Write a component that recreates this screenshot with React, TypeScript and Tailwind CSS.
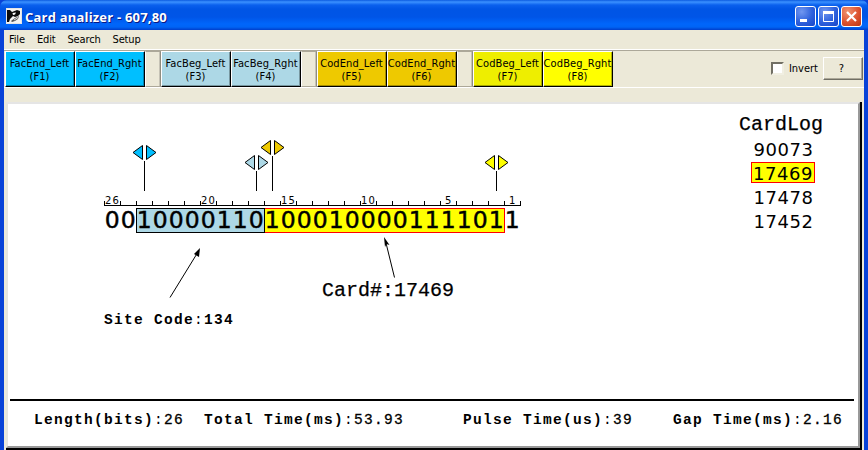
import React from 'react';

const UI = "font-['DejaVu_Sans_Condensed','DejaVu_Sans',sans-serif]";

type Tool = { label: string; fkey: string; color: string };

const groups: Tool[][] = [
  [
    { label: 'FacEnd_Left', fkey: '(F1)', color: 'bg-[#00bfff]' },
    { label: 'FacEnd_Rght', fkey: '(F2)', color: 'bg-[#00bfff]' },
  ],
  [
    { label: 'FacBeg_Left', fkey: '(F3)', color: 'bg-[#add8e6]' },
    { label: 'FacBeg_Rght', fkey: '(F4)', color: 'bg-[#add8e6]' },
  ],
  [
    { label: 'CodEnd_Left', fkey: '(F5)', color: 'bg-[#eec900]' },
    { label: 'CodEnd_Rght', fkey: '(F6)', color: 'bg-[#eec900]' },
  ],
  [
    { label: 'CodBeg_Left', fkey: '(F7)', color: 'bg-[#eeee00]' },
    { label: 'CodBeg_Rght', fkey: '(F8)', color: 'bg-[#ffff00]' },
  ],
];

function ToolButton({ label, fkey, color }: Tool) {
  return (
    <button
      className={`flex h-9 w-[70px] flex-col items-center justify-center border border-t-white border-l-white border-r-black border-b-black pt-px text-[11px] leading-[13px] whitespace-nowrap shadow-[inset_-1px_-1px_0_rgba(0,0,0,0.3)] ${color}`}
    >
      <span className="-ml-px tracking-[0.1px]">{label}</span>
      <span className="-ml-px tracking-[0.1px]">{fkey}</span>
    </button>
  );
}

function Spacer() {
  return <div className="h-9 w-4 border border-t-[#aca899] border-l-white border-r-[#8f8c80] border-b-[#aca899] shadow-[inset_-1px_0_0_#c5c2b5]" />;
}

function AppIcon() {
  return (
    <svg width="16" height="16" viewBox="0 0 16 16">
      <rect width="16" height="16" fill="#f4f4f4" />
      <path d="M1 2H4L6 4L11 2L14 3L14 6L12 8L9 9L7 8L4 11L3 14H1Z" fill="#0b0b0b" />
      <path d="M6.5 5L10 4.5L9 6.5L7 7Z" fill="#fff" />
      <path d="M5 13L9 10L13 8L12 11L9 13L6 14Z" fill="#555" />
      <path d="M8 12L12 9.5" stroke="#ddd" />
      <rect x="0.5" y="0.5" width="15" height="15" fill="none" stroke="#e4e4e4" />
    </svg>
  );
}

function CaptionButton({ kind }: { kind: 'min' | 'max' | 'close' }) {
  const tone =
    kind === 'close'
      ? 'bg-[radial-gradient(circle_at_30%_25%,#f09472,#dd5330_55%,#bb3411)]'
      : 'bg-[radial-gradient(circle_at_30%_25%,#7197f0,#2d60dc_55%,#1645c8)]';
  return (
    <button className={`flex h-[21px] w-[21px] items-center justify-center rounded-[3px] border border-white ${tone}`}>
      <svg width="19" height="19" viewBox="0 0 19 19" fill="none" stroke="#fff">
        {kind === 'min' && <rect x="4" y="12" width="7" height="3" fill="#fff" stroke="none" />}
        {kind === 'max' && <path d="M4.5 14.5V5H14.5V14.5Z" />}
        {kind === 'max' && <path d="M4 5.5H15" strokeWidth="3" />}
        {kind === 'close' && <path d="M5 5L14 14M14 5L5 14" strokeWidth="2.2" />}
      </svg>
    </button>
  );
}

function Marker({ x, y, fill }: { x: number; y: number; fill: string }) {
  return (
    <g stroke="#000" fill={fill}>
      <path d={`M${x - 11} ${y}L${x - 1.5} ${y - 7}V${y + 7}Z`} />
      <path d={`M${x + 12} ${y}L${x + 2.5} ${y - 7}V${y + 7}Z`} />
      <path d={`M${x + 0.5} ${y + 8.5}V191`} />
    </g>
  );
}

const bits = '00100001101000100001111011';
const labels = [
  { text: '26', x: 105 },
  { text: '20', x: 201 },
  { text: '15', x: 281 },
  { text: '10', x: 361 },
  { text: '5', x: 445 },
  { text: '1', x: 509 },
];

function Diagram() {
  return (
    <svg width="600" height="295" viewBox="8 104 600 295" className="shrink-0">
      <Marker x={144} y={152.5} fill="#00bfff" />
      <Marker x={256} y={162.5} fill="#add8e6" />
      <Marker x={272} y={147.5} fill="#eec900" />
      <Marker x={496} y={162.5} fill="#ffff00" />
      <path d="M104 205.5H521" stroke="#000" />
      {Array.from({ length: 27 }, (_, i) => (
        <path key={i} d={`M${104.5 + i * 16} 201V205`} stroke="#000" />
      ))}
      <g className="font-['DejaVu_Sans',sans-serif] text-[10px]">
        {labels.map((l) => (
          <text key={l.text} x={l.x} y="204" letterSpacing="1.1">
            {l.text}
          </text>
        ))}
      </g>
      <rect x="136.5" y="208.5" width="128" height="24" fill="#add8e6" stroke="#000" />
      <rect x="264.5" y="208.5" width="240" height="24" fill="#ffff00" stroke="#f00" />
      <path d="M264.5 208V233" stroke="#000" />
      <text
        x={bits.split('').map((_, i) => 112.2 + i * 16).join(' ')}
        y="228"
        textAnchor="middle"
        stroke="#000"
        strokeWidth="0.45"
        className="font-['DejaVu_Sans',sans-serif] text-[23.5px]"
      >
        {bits}
      </text>
      <path d="M170 297.5L198 252" stroke="#000" />
      <path d="M200 248L199 257L194 254Z" />
      <path d="M394.5 277.5L386 243" stroke="#000" />
      <path d="M384 237L389.5 245L386.5 244L385 247Z" />
      <text x="322" y="296" stroke="#000" strokeWidth="0.25" className="font-['Liberation_Mono',monospace] text-[20px]">
        Card#:17469
      </text>
      <text x="104" y="324" className="font-['Liberation_Mono',monospace] text-[14.5px] font-bold" letterSpacing="1.3">
        Site Code<tspan className="font-normal">:</tspan>134
      </text>
    </svg>
  );
}

function Stat({ name, value, className }: { name: string; value: string; className: string }) {
  return (
    <div className={`shrink-0 whitespace-pre ${className}`}>
      <span className="font-bold">{name}</span>:<span className="[-webkit-text-stroke:0.3px_#000]">{value}</span>
    </div>
  );
}

export default function App() {
  return (
    <div className={`flex h-[450px] w-[868px] flex-col overflow-hidden bg-[#0842d8] text-black ${UI}`}>
      <header className="flex h-[30px] shrink-0 items-start rounded-t-[7px] bg-[linear-gradient(to_bottom,#0c5be0_0,#3b91ff_2px,#0a60ed_5px,#0055e5_9px,#0055e7_17px,#0066fb_24px,#0064f5_27px,#003ecb_30px)] pr-[6px] pl-[6px]">
        <div className="mt-2">
          <AppIcon />
        </div>
        <h1 className="mt-[7px] ml-[3px] flex-1 font-['Open_Sans','Noto_Sans',sans-serif] text-[13px] leading-[20px] font-bold tracking-[0.2px] text-white [text-shadow:1px_1px_0_#0a1883]">
          Card analizer - 607,80
        </h1>
        <div className="mt-[6px] flex gap-[2px]">
          <CaptionButton kind="min" />
          <CaptionButton kind="max" />
          <CaptionButton kind="close" />
        </div>
      </header>

      <div className="mr-1 ml-1 flex flex-1 flex-col bg-[#ece9d8]">
        <nav className="flex h-5 shrink-0 items-center gap-3 border-b border-white pt-px pl-[5px] text-[11px] tracking-[-0.15px]">
          <span>File</span>
          <span>Edit</span>
          <span>Search</span>
          <span>Setup</span>
        </nav>

        <div className="flex h-[38px] shrink-0 items-start border-t border-b border-t-[#aca899] border-b-white pr-px pl-px">
          {groups.map((g, i) => (
            <React.Fragment key={i}>
              {i > 0 && <Spacer />}
              {g.map((t) => (
                <ToolButton key={t.label} {...t} />
              ))}
            </React.Fragment>
          ))}
          <label className="mt-[11px] ml-auto flex items-center gap-[5px] text-[11px] leading-[13px]">
            <span className="h-[13px] w-[13px] border-2 border-t-[#716f64] border-r-[#f1efe2] border-b-[#f1efe2] border-l-[#716f64] bg-white" />
            Invert
          </label>
          <button className="mt-[6px] ml-[5px] h-[23px] w-10 border border-t-white border-r-[#716f64] border-b-[#716f64] border-l-white pr-[3px] text-[11px] leading-[22px] shadow-[inset_-1px_-1px_0_#aca899]">
            ?
          </button>
        </div>

        <main className="mt-[14px] mr-[2px] ml-[2px] flex flex-1 flex-col border-r-2 border-b-2 border-black">
          <div className="flex flex-1 flex-col border-2 border-t-[#e5e5e5] border-r-[#999] border-b-[#999] border-l-[#e5e5e0] bg-white">
            <div className="flex h-[295px] shrink-0">
              <Diagram />
              <aside className="ml-[123px] w-[100px] pt-[9px] text-center font-['Liberation_Mono',monospace] text-[20px] leading-[24px] [-webkit-text-stroke:0.25px_#000]">
                <div className="mb-px h-6">CardLog</div>
                <div className="font-['DejaVu_Sans',sans-serif] text-[18px] tracking-[0.5px] [-webkit-text-stroke:0]">
                  <div className="ml-[5px] h-6">90073</div>
                  <div className="ml-[20px] h-[21px] w-[64px] border border-[#f00] bg-[#ff0] leading-[21px]">17469</div>
                  <div className="mt-[3px] ml-[5px] h-6">17478</div>
                  <div className="ml-[5px] h-6">17452</div>
                </div>
              </aside>
            </div>
            <footer className="mr-1 ml-0.5 flex h-[47px] border-t-2 border-black pt-[10px] pl-6 font-['Liberation_Mono',monospace] text-[14.5px] leading-[18px] tracking-[1.3px]">
              <Stat name="Length(bits)" value="26" className="w-[170px]" />
              <Stat name="Total Time(ms)" value="53.93" className="w-[259px]" />
              <Stat name="Pulse Time(us)" value="39" className="w-[210px]" />
              <Stat name="Gap Time(ms)" value="2.16" className="w-[170px]" />
            </footer>
          </div>
        </main>
      </div>
    </div>
  );
}
